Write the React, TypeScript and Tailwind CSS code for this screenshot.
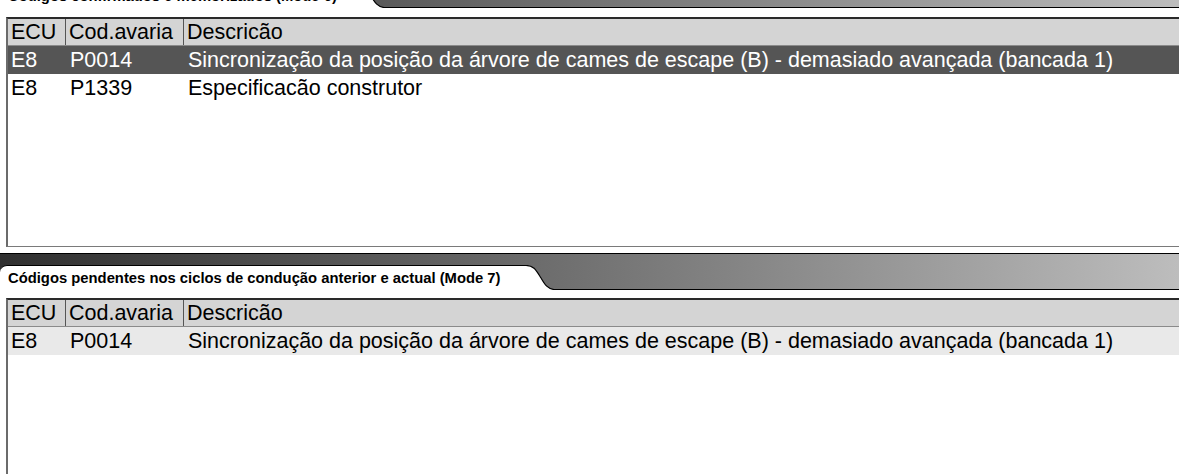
import React from "react";

const FONT = { fontFamily: '"Liberation Sans", Arial, sans-serif' };

function TabBar({ title, tabW, className = "" }: { title: string; tabW: string; className?: string }) {
  return (
    <div className={`h-[37px] flex flex-col border-t border-black bg-gradient-to-r from-[#303030] to-[#bdbdbd] ${className}`}>
      <div className="h-[11px] shrink-0" />
      <div className="flex flex-1 items-stretch">
        <div className={`${tabW} bg-white rounded-tl-[7px] border-t border-black flex items-center pl-[8px] pt-[1px] text-[14.8px] font-bold text-black whitespace-nowrap leading-none`}>
          {title}
        </div>
        <svg width="34" height="25" viewBox="0 0 34 25" className="block shrink-0">
          <path d="M0,0.5 L4,0.5 C12,0.5 14,5 19,13 C23,20 26,24 32,24.5 L34,24.5 L34,25 L0,25 Z" fill="#ffffff" />
          <path d="M0,0.5 L4,0.5 C12,0.5 14,5 19,13 C23,20 26,24 32,24.5 L34,24.5" fill="none" stroke="#000" strokeWidth="1.2" />
        </svg>
        <div className="flex-1 border-b border-black" />
      </div>
    </div>
  );
}

type Row = { ecu: string; code: string; desc: string };

function FaultTable({ rows, rowStyles, className = "" }: { rows: Row[]; rowStyles: string[]; className?: string }) {
  return (
    <div className={`ml-[6px] border-t-2 border-l-2 border-t-[#2a2a2a] border-l-[#6b6b6b] bg-white text-[21.5px] leading-none ${className}`}>
      <div className="grid grid-cols-[58px_118px_1fr] h-[27px] bg-[#d4d4d4] border-b border-[#8a8a8a] text-black">
        <div className="pl-[3px] pt-[2px] flex items-center border-r border-[#555]">ECU</div>
        <div className="pl-[3px] pt-[2px] flex items-center border-r border-[#555]">Cod.avaria</div>
        <div className="pl-[3px] pt-[2px] flex items-center">Descricão</div>
      </div>
      {rows.map((r, i) => (
        <div key={i} className={`grid grid-cols-[58px_118px_1fr] h-[28px] ${rowStyles[i]}`}>
          <div className="pl-[3px] pt-[2px] flex items-center">{r.ecu}</div>
          <div className="pl-[4px] pt-[2px] flex items-center">{r.code}</div>
          <div className="pl-[4px] pt-[2px] flex items-center whitespace-nowrap">{r.desc}</div>
        </div>
      ))}
    </div>
  );
}

const DESC1 = "Sincronização da posição da árvore de cames de escape (B) - demasiado avançada (bancada 1)";

export default function App() {
  return (
    <div className="w-[1179px] h-[474px] overflow-hidden bg-white flex flex-col" style={FONT}>
      <TabBar title="Códigos confirmados e memorizados (Mode 6)" tabW="w-[352px]" className="mt-[-29px] shrink-0" />
      <FaultTable
        className="mt-[9px] h-[230px] shrink-0 border-b border-b-[#7a7a7a]"
        rows={[
          { ecu: "E8", code: "P0014", desc: DESC1 },
          { ecu: "E8", code: "P1339", desc: "Especificacão construtor" },
        ]}
        rowStyles={["bg-[#555555] text-white", "bg-white text-black"]}
      />
      <TabBar title="Códigos pendentes nos ciclos de condução anterior e actual (Mode 7)" tabW="w-[522px]" className="mt-[6px] shrink-0" />
      <FaultTable
        className="mt-[8px] flex-1"
        rows={[{ ecu: "E8", code: "P0014", desc: DESC1 }]}
        rowStyles={["bg-[#e9e9e9] text-black"]}
      />
    </div>
  );
}
